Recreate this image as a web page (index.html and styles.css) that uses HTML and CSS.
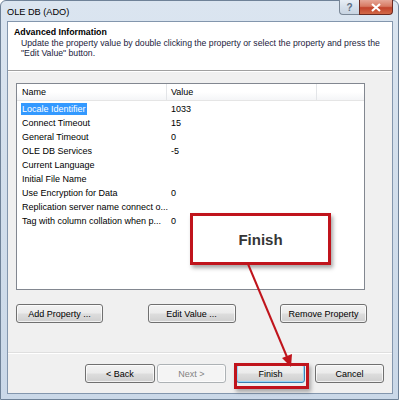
FILE: index.html
```html
<!DOCTYPE html>
<html>
<head>
<meta charset="utf-8">
<link rel="stylesheet" href="styles.css">
</head>
<body>
<div class="window">
  <div class="titlebar">
    <span class="title">OLE DB (ADO)</span>
    <div class="caption-btns">
      <div class="cap-btn help">?</div>
      <div class="cap-btn close">
        <svg width="12" height="9" viewBox="0 0 12 9"><path d="M2 1 L10 8 M10 1 L2 8" stroke="#fff" stroke-width="2.2" fill="none"/></svg>
      </div>
    </div>
  </div>
  <div class="client">
    <div class="header">
      <div class="h-title">Advanced Information</div>
      <div class="h-desc">Update the property value by double clicking the property or select the property and press the<br>"Edit Value" button.</div>
    </div>
    <div class="body">
      <div class="list">
        <div class="list-head">
          <div class="col-name">Name</div>
          <div class="col-value">Value</div>
          <div class="col-rest"></div>
        </div>
        <div class="rows">
          <div class="row"><div class="name"><span class="sel">Locale Identifier</span></div><div class="value">1033</div></div>
          <div class="row"><div class="name"><span>Connect Timeout</span></div><div class="value">15</div></div>
          <div class="row"><div class="name"><span>General Timeout</span></div><div class="value">0</div></div>
          <div class="row"><div class="name"><span>OLE DB Services</span></div><div class="value">-5</div></div>
          <div class="row"><div class="name"><span>Current Language</span></div><div class="value"></div></div>
          <div class="row"><div class="name"><span>Initial File Name</span></div><div class="value"></div></div>
          <div class="row"><div class="name"><span>Use Encryption for Data</span></div><div class="value">0</div></div>
          <div class="row"><div class="name"><span>Replication server name connect o...</span></div><div class="value"></div></div>
          <div class="row"><div class="name"><span>Tag with column collation when p...</span></div><div class="value">0</div></div>
        </div>
      </div>
      <div class="prop-btns">
        <div class="btn w87">Add Property ...</div>
        <div class="btn w88">Edit Value ...</div>
        <div class="btn w87">Remove Property</div>
      </div>
    </div>
    <div class="footer">
      <div class="btn w70">&lt; Back</div>
      <div class="btn w69 disabled gap2">Next &gt;</div>
      <div class="btn w69 default gap10">Finish</div>
      <div class="btn w69 gap10">Cancel</div>
    </div>
  </div>

  <div class="callout">Finish</div>
  <svg class="arrow" width="399" height="400" viewBox="0 0 399 400">
    <line x1="248" y1="264" x2="287" y2="357" stroke="#c0141c" stroke-width="2"/>
    <polygon points="291,367 292,354 282,358" fill="#c0141c"/>
  </svg>
  <div class="finish-mark"></div>
</div>
</body>
</html>
```
FILE: styles.css
```css
* { box-sizing: border-box; }
html, body { margin: 0; padding: 0; }
body {
  width: 399px;
  height: 400px;
  overflow: hidden;
  background: #ffffff;
  font-family: "Liberation Sans", Arial, sans-serif;
  font-size: 9px;
  color: #000;
}
.window {
  position: relative;
  width: 399px;
  height: 400px;
  display: flex;
  flex-direction: column;
  padding: 0 5px 5px 6px;
  background: linear-gradient(180deg, #dbe5f0 0%, #d3dfec 40%, #cad8e8 100%);
  border: 1px solid #6f8298;
  border-radius: 6px 6px 0 0;
}
.titlebar {
  height: 20px;
  display: flex;
  align-items: flex-start;
  justify-content: space-between;
  flex: none;
}
.title {
  font-size: 9.2px;
  margin-top: 6px;
  color: #000;
}
.caption-btns {
  display: flex;
  margin-right: 0px;
  margin-top: -1px;
}
.cap-btn {
  height: 15px;
  border: 1px solid #7a8796;
  border-top: none;
  display: flex;
  align-items: center;
  justify-content: center;
}
.help {
  width: 20px;
  border-radius: 0 0 0 4px;
  border-right: none;
  background: linear-gradient(180deg, #e8eef5 0%, #d5dfea 50%, #c8d4e2 100%);
  color: #5b6d82;
  font-size: 10px;
  font-weight: bold;
}
.close {
  width: 34px;
  border-radius: 0 0 4px 0;
  border-color: #6c2a20;
  background: linear-gradient(180deg, #e6a798 0%, #d77a63 45%, #c2432c 55%, #d26a48 100%);
}
.client {
  flex: 1;
  display: flex;
  flex-direction: column;
  border: 1px solid #8396ad;
  background: #f0f0f0;
}
.header {
  height: 49px;
  flex: none;
  background: #ffffff;
  border-bottom: 1px solid #a0a0a0;
  padding: 4px 0 0 6px;
}
.h-title {
  font-weight: bold;
  font-size: 8.8px;
  line-height: 12px;
}
.h-desc {
  padding-left: 7px;
  line-height: 10px;
  white-space: nowrap;
  color: #1b1b3c;
  font-size: 8.7px;
}
.body {
  flex: 1;
  padding: 12px 0 0 8px;
  box-shadow: inset 0 1px 0 #ffffff;
}
.list {
  width: 349px;
  height: 207px;
  border: 1px solid #828790;
  background: #ffffff;
}
.list-head {
  height: 17px;
  display: flex;
  border-bottom: 1px solid #e5e5e5;
  background: linear-gradient(180deg, #ffffff 0%, #ffffff 50%, #f4f5f7 100%);
}
.col-name, .col-value, .col-rest {
  display: flex;
  align-items: center;
  border-right: 1px solid #e3e5e8;
}
.col-name { width: 150px; padding-left: 5px; }
.col-value { width: 150px; padding-left: 4px; }
.col-rest { flex: 1; border-right: none; }
.rows { padding-top: 1px; }
.row {
  height: 14px;
  display: flex;
  align-items: center;
}
.name {
  width: 150px;
  padding-left: 4px;
  white-space: nowrap;
}
.name span { padding: 1px 1px; }
.name .sel {
  background: #3399ff;
  color: #ffffff;
}
.value { padding-left: 4px; }
.prop-btns {
  margin-top: 14px;
  width: 351px;
  display: flex;
  justify-content: space-between;
}
.btn {
  height: 19px;
  border: 1px solid #707070;
  border-radius: 3px;
  display: flex;
  align-items: center;
  justify-content: center;
  background: linear-gradient(180deg, #f2f2f2 0%, #ebebeb 48%, #dddddd 52%, #cfcfcf 100%);
  box-shadow: inset 0 0 0 1px rgba(255,255,255,0.7);
  color: #000;
  white-space: nowrap;
}
.w87 { width: 87px; }
.w88 { width: 88px; }
.w70 { width: 70px; }
.w69 { width: 69px; }
.gap2 { margin-left: 2px; }
.gap10 { margin-left: 10px; }
.disabled {
  border-color: #adb2b5;
  background: #f4f4f4;
  color: #838383;
}
.default {
  border-color: #3c7fb1;
  box-shadow: inset 0 0 0 1px #9ad6f5;
}
.footer {
  height: 41px;
  flex: none;
  border-top: 1px solid #dfdfdf;
  box-shadow: inset 0 1px 0 #ffffff;
  display: flex;
  justify-content: flex-end;
  padding: 11px 8px 0 0;
  align-items: flex-start;
}
.callout {
  position: absolute;
  left: 189px;
  top: 212px;
  width: 141px;
  height: 52px;
  border: 3px solid #c0141c;
  background: #ffffff;
  box-shadow: 2px 3px 4px rgba(0,0,0,0.35);
  display: flex;
  align-items: center;
  justify-content: center;
  font-weight: bold;
  font-size: 15px;
  color: #363636;
}
.arrow {
  position: absolute;
  left: -1px;
  top: -1px;
}
.finish-mark {
  position: absolute;
  left: 233px;
  top: 362px;
  width: 75px;
  height: 26px;
  border: 3px solid #c0141c;
  box-shadow: 2px 3px 4px rgba(0,0,0,0.3);
}
```
